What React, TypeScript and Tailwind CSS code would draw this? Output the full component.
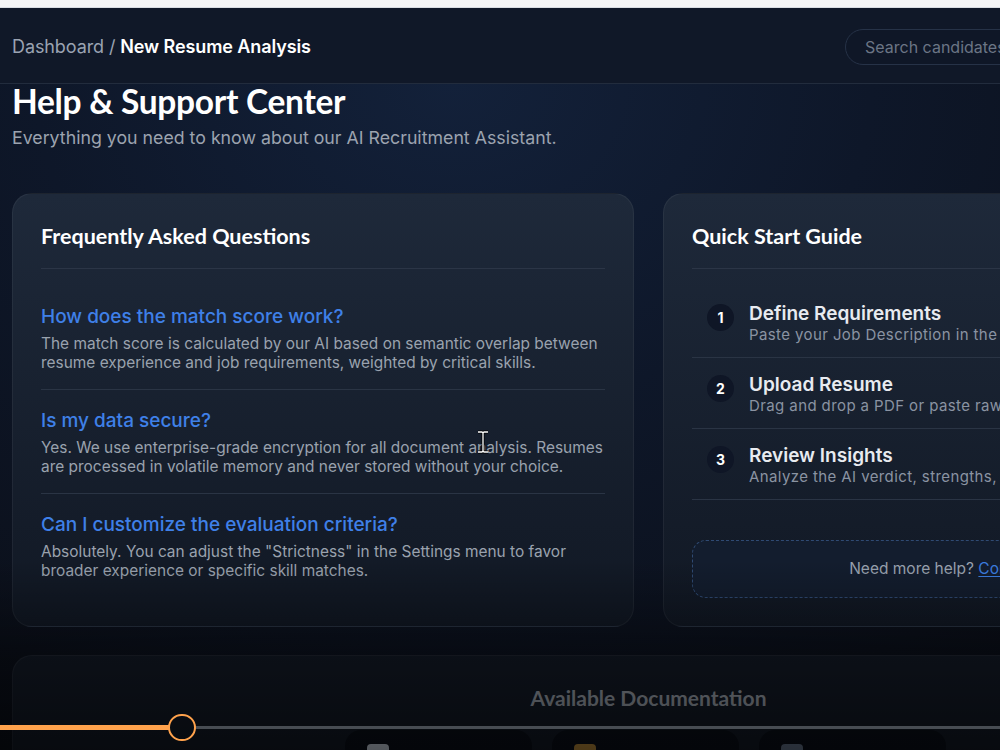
import React from "react";

const heading = { fontFamily: "Lato, 'Noto Sans', sans-serif" };
const body = { fontFamily: "Inter, 'Noto Sans', sans-serif" };

const faqs = [
  {
    q: "How does the match score work?",
    a: "The match score is calculated by our AI based on semantic overlap between resume experience and job requirements, weighted by critical skills.",
  },
  {
    q: "Is my data secure?",
    a: "Yes. We use enterprise-grade encryption for all document analysis. Resumes are processed in volatile memory and never stored without your choice.",
  },
  {
    q: "Can I customize the evaluation criteria?",
    a: 'Absolutely. You can adjust the "Strictness" in the Settings menu to favor broader experience or specific skill matches.',
  },
];

const steps = [
  {
    n: 1,
    t: "Define Requirements",
    d: "Paste your Job Description in the left panel.",
  },
  {
    n: 2,
    t: "Upload Resume",
    d: "Drag and drop a PDF or paste raw text.",
  },
  {
    n: 3,
    t: "Review Insights",
    d: "Analyze the AI verdict, strengths, and gaps.",
  },
];

const docs = [
  { t: "User Guide", c: "bg-[#cbd5e1]" },
  { t: "API Reference", c: "bg-[#b98b3a]" },
  { t: "Best Practices", c: "bg-[#64748b]" },
];

export default function App() {
  return (
    <div
      className="relative w-[1000px] h-[750px] overflow-hidden bg-[#0b101b]"
      style={body}
    >
      <div className="h-[8px] bg-[#f4f5f6] border-b border-[#d9dde3]" />
      <div className="w-[1297px] h-[742px] bg-[radial-gradient(ellipse_at_35%_10%,#13213a_0%,#0e1729_35%,#0b101b_70%,#070a11_100%)]">
        {/* top bar */}
        <header className="h-[76px] flex items-center justify-between pl-[12px] pr-[24px] pt-[2px] border-b border-[#222c3d] bg-[#101828]">
          <div className="text-[18px] tracking-[-0.1px]">
            <span className="text-[#9aa3b2]">Dashboard / </span>
            <span className="text-white font-semibold">New Resume Analysis</span>
          </div>
          <div className="w-[428px] h-[36px] rounded-full border border-[#263247] bg-[#0f1727] flex items-center pl-[19px] text-[16px] text-[#6b7585]">
            Search candidates...
          </div>
        </header>

        <main className="px-[12px]">
          <h1
            className="text-[33.5px] leading-[34px] font-bold text-white tracking-[-0.3px]"
            style={heading}
          >
            Help &amp; Support Center
          </h1>
          <p className="mt-[6px] text-[17.75px] leading-[28px] text-[#9ca3af]">
            Everything you need to know about our AI Recruitment Assistant.
          </p>

          <div className="mt-[41px] grid grid-cols-2 gap-[29px]">
            {/* FAQ */}
            <section className="rounded-[20px] border border-white/5 bg-gradient-to-b from-[#1e293a] to-[#111824] px-[28px] pt-[28px] pb-[29px]">
              <h2
                className="text-[21.5px] leading-[28px] font-bold text-white pb-[18px] border-b border-[#2b3546]"
                style={heading}
              >
                Frequently Asked Questions
              </h2>
              <div className="mt-[17px] divide-y divide-[#2a3444]">
                {faqs.map((f) => (
                  <div key={f.q} className="pt-[18px] pb-[17px]">
                    <h3 className="text-[19px] leading-[26px] font-medium text-[#3f80e8]">
                      {f.q}
                    </h3>
                    <p className="mt-[4px] text-[15.45px] leading-[19px] text-[#9aa2ae]">
                      {f.a}
                    </p>
                  </div>
                ))}
              </div>
            </section>

            {/* Quick start */}
            <section className="rounded-[20px] border border-white/5 bg-gradient-to-b from-[#1e293a] to-[#111824] px-[28px] pt-[28px] pb-[28px]">
              <h2
                className="text-[21.5px] leading-[28px] font-bold text-white pb-[18px] border-b border-[#2b3546]"
                style={heading}
              >
                Quick Start Guide
              </h2>
              <div className="mt-[18px] divide-y divide-[#2a3444] border-b border-[#2a3444]">
                {steps.map((s) => (
                  <div key={s.n} className="flex items-start gap-[15px] pl-[15px] pt-[16px] pb-[12px]">
                    <div className="mt-[1px] w-[27px] h-[27px] shrink-0 rounded-full bg-[#0f1626] flex items-center justify-center text-[14px] font-bold text-white">
                      {s.n}
                    </div>
                    <div className="whitespace-nowrap">
                      <div className="text-[19px] leading-[22px] font-semibold text-[#e8ebf0]">
                        {s.t}
                      </div>
                      <div className="text-[15px] leading-[20px] text-[#8a93a2] tracking-[0.4px]">
                        {s.d}
                      </div>
                    </div>
                  </div>
                ))}
              </div>
              <div className="mt-[40px] h-[58px] rounded-[14px] border border-dashed border-[#2f4a73] bg-[#131d2e] flex items-center justify-center text-[15.5px]">
                <span className="text-[#9aa3b0]">Need more help?&nbsp;</span>
                <span className="text-[#3b7de0] underline underline-offset-2">
                  Contact Support
                </span>
              </div>
            </section>
          </div>

          {/* Docs */}
          <section className="mt-[28px] rounded-[20px] border border-white/5 bg-[#131a26] pt-[29px]">
            <h2
              className="text-center text-[21px] leading-[26px] font-bold text-[#9aa1ab]"
              style={heading}
            >
              Available Documentation
            </h2>
            <div className="mt-[19px] flex justify-center gap-[20px] pr-[6px]">
              {docs.map((d) => (
                <div key={d.t} className="w-[187px] h-[110px] rounded-[16px] bg-[#0a0f19] px-[22px] pt-[14px]">
                  <div className={`w-[22px] h-[24px] rounded-[4px] ${d.c}`} />
                  <div className="mt-[10px] text-[15px] font-semibold text-white">{d.t}</div>
                </div>
              ))}
            </div>
          </section>
        </main>
      </div>

      {/* player shade */}
      <div className="pointer-events-none absolute left-0 right-0 bottom-0 h-[190px] bg-gradient-to-b from-transparent via-black/40 to-black/60" />

      {/* progress bar */}
      <div className="absolute left-0 top-[725px] w-[170px] h-[5px] bg-[#ffa24c]" />
      <div className="absolute left-[194px] right-0 top-[726px] h-[3px] bg-[#474c52]" />
      <div className="absolute left-[168px] top-[714px] w-[28px] h-[27px] rounded-full border-2 border-[#ffa24c]" />

      {/* text cursor */}
      <svg
        className="absolute left-[476px] top-[430px]"
        width="14"
        height="24"
        viewBox="0 0 14 24"
      >
        <path
          d="M2 2h4l1 1 1-1h4M7 3v18M2 22h4l1-1 1 1h4"
          fill="none"
          stroke="#000"
          strokeWidth="3"
        />
        <path
          d="M2 2h4l1 1 1-1h4M7 3v18M2 22h4l1-1 1 1h4"
          fill="none"
          stroke="#fff"
          strokeWidth="1.3"
        />
      </svg>
    </div>
  );
}
